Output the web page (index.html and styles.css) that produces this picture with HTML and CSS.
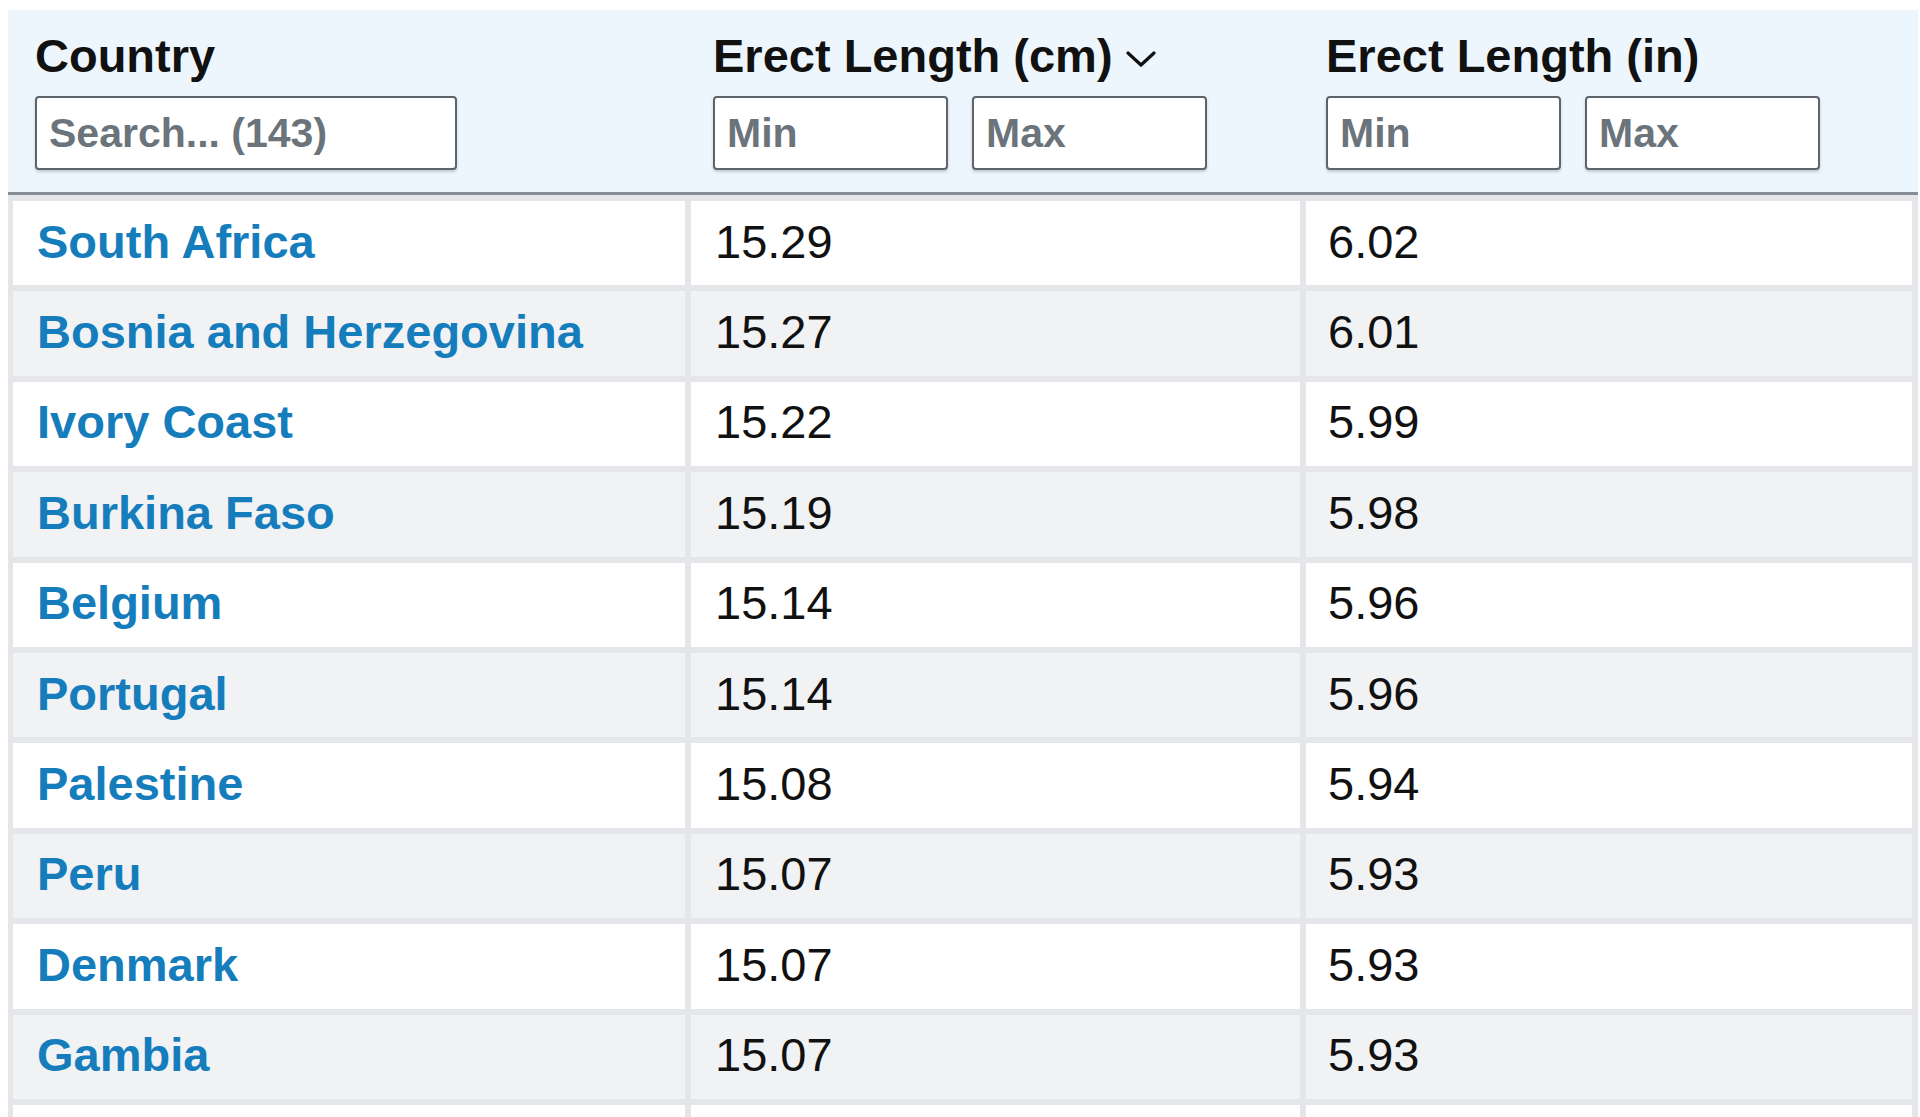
FILE: index.html
```html
<!DOCTYPE html>
<html lang="en">
<head>
<meta charset="utf-8">
<title>Erect Length by Country</title>
<link rel="stylesheet" href="styles.css">
</head>
<body>
<div class="tbl">
  <div class="thead">
    <div class="th">
      <div class="label">Country</div>
      <div class="filters"><input class="search" type="text" placeholder="Search... (143)"></div>
    </div>
    <div class="th">
      <div class="label">Erect Length (cm)<svg class="chev" width="30" height="18" viewBox="0 0 30 18"><path d="M2 3 L15 15 L28 3" fill="none" stroke="#111" stroke-width="3.2" stroke-linecap="round" stroke-linejoin="round"/></svg></div>
      <div class="filters"><input class="range" type="text" placeholder="Min"><input class="range" type="text" placeholder="Max"></div>
    </div>
    <div class="th">
      <div class="label">Erect Length (in)</div>
      <div class="filters"><input class="range" type="text" placeholder="Min"><input class="range" type="text" placeholder="Max"></div>
    </div>
  </div>
  <div class="tbody">
    <div class="row"><div class="td name"><a href="#">South Africa</a></div><div class="td">15.29</div><div class="td">6.02</div></div>
    <div class="row alt"><div class="td name"><a href="#">Bosnia and Herzegovina</a></div><div class="td">15.27</div><div class="td">6.01</div></div>
    <div class="row"><div class="td name"><a href="#">Ivory Coast</a></div><div class="td">15.22</div><div class="td">5.99</div></div>
    <div class="row alt"><div class="td name"><a href="#">Burkina Faso</a></div><div class="td">15.19</div><div class="td">5.98</div></div>
    <div class="row"><div class="td name"><a href="#">Belgium</a></div><div class="td">15.14</div><div class="td">5.96</div></div>
    <div class="row alt"><div class="td name"><a href="#">Portugal</a></div><div class="td">15.14</div><div class="td">5.96</div></div>
    <div class="row"><div class="td name"><a href="#">Palestine</a></div><div class="td">15.08</div><div class="td">5.94</div></div>
    <div class="row alt"><div class="td name"><a href="#">Peru</a></div><div class="td">15.07</div><div class="td">5.93</div></div>
    <div class="row"><div class="td name"><a href="#">Denmark</a></div><div class="td">15.07</div><div class="td">5.93</div></div>
    <div class="row alt"><div class="td name"><a href="#">Gambia</a></div><div class="td">15.07</div><div class="td">5.93</div></div>
    <div class="row"><div class="td name"></div><div class="td"></div><div class="td"></div></div>
  </div>
</div>
</body>
</html>
```
FILE: styles.css
```css
* { box-sizing: border-box; }
html, body { margin: 0; padding: 0; background: #ffffff; overflow: hidden; }
body {
  font-family: "Liberation Sans", Arial, sans-serif;
  color: #111111;
  padding: 10px 0 0 8px;
  height: 1117px;
}
.tbl {
  width: 1910px;
}
.thead {
  display: grid;
  grid-template-columns: 677px 615px 618px;
  background: #eef6fd;
  border-bottom: 3px solid #878f96;
  height: 185px;
}
.th {
  padding: 19px 0 0 27px;
}
.th:nth-child(2) { padding-left: 28px; }
.th:nth-child(3) { padding-left: 26px; }
.label {
  font-size: 47px;
  font-weight: bold;
  line-height: 53px;
  height: 53px;
  white-space: nowrap;
  display: flex;
  align-items: center;
}
.chev { margin-left: 13px; margin-top: 6px; }
.filters {
  display: flex;
  gap: 24px;
  margin-top: 14px;
}
input {
  height: 74px;
  border: 2px solid #5d646b;
  border-radius: 4px;
  box-shadow: 0 2px 3px rgba(0, 0, 0, 0.18);
  background: #ffffff;
  font-family: "Liberation Sans", Arial, sans-serif;
  font-size: 41px;
  font-weight: bold;
  color: #333;
  padding: 0 12px;
  margin: 0;
}
input::placeholder { color: #6b737b; opacity: 1; }
.search { width: 422px; }
.range { width: 235px; }
.tbody {
  background: #e4e6e9;
  padding: 6px 6px 0 5px;
  display: grid;
  row-gap: 6px;
}
.row {
  display: grid;
  grid-template-columns: 672px 609px 606px;
  column-gap: 6px;
  height: 84.4px;
}
.td {
  background: #ffffff;
  display: flex;
  align-items: center;
  padding-left: 24px;
  padding-bottom: 4px;
  font-size: 47px;
  white-space: nowrap;
}
.td:nth-child(3) { padding-left: 22px; }
.row.alt .td { background: #f1f2f4; }
.name a {
  color: #157dbc;
  font-weight: bold;
  text-decoration: none;
}
```
